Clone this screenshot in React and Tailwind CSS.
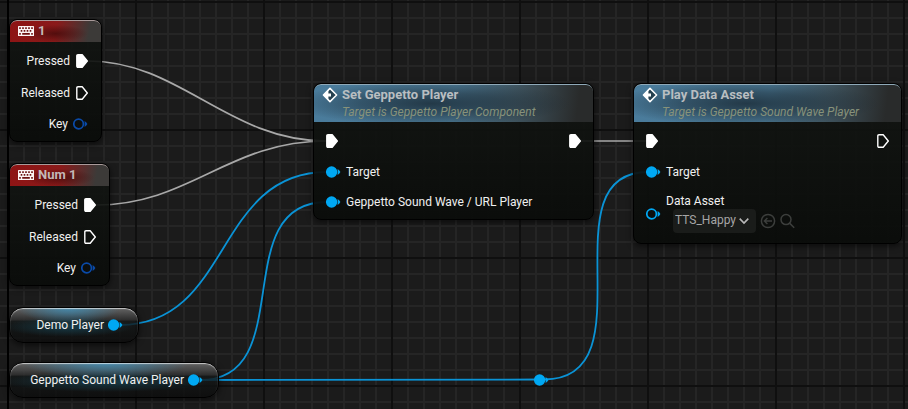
import React from "react";

const WHITE = "#ffffff";
const SKY = "#00a8f3";
const NAVY = "#0a4aa8";

function ExecPin({ filled }) {
  return (
    <svg width="12" height="14" viewBox="0 0 12 14" className="shrink-0">
      <path
        d="M2 .8H6.2L11.3 7 6.2 13.2H2Q.8 13.2 .8 12V2Q.8 .8 2 .8Z"
        fill={filled ? WHITE : "none"}
        stroke={WHITE}
        strokeWidth="1.4"
        strokeLinejoin="round"
      />
    </svg>
  );
}

function DataPin({ color = SKY, filled }) {
  return (
    <svg width="16" height="12" viewBox="0 0 16 12" className="shrink-0">
      <circle cx="5.6" cy="6" r="4.8" fill={filled ? color : "none"} stroke={color} strokeWidth="1.7" />
      <path d="M11.6 3Q13.8 4.6 14.4 6 13.8 7.4 11.6 9Z" fill={color} />
    </svg>
  );
}

function KeyboardIcon() {
  return (
    <svg width="16" height="10" viewBox="0 0 16 10" className="shrink-0">
      <rect width="16" height="10" rx="0.6" fill="#fbf4f4" />
      <g fill="#6d1010">
        <path d="M1.2 1.2h1.6V3H1.2zM4.2 1.2h1.6V3H4.2zM7.2 1.2h1.6V3H7.2zM10.2 1.2h1.6V3h-1.6zM13.2 1.2h1.6V3h-1.6z" />
        <path d="M2.7 4.1h1.6v1.6H2.7zM5.7 4.1h1.6v1.6H5.7zM8.7 4.1h1.6v1.6H8.7zM11.7 4.1h1.6v1.6h-1.6z" />
        <path d="M1.2 7h1.6v1.7H1.2zM4.2 7h7.6v1.7H4.2zM13.2 7h1.6v1.7h-1.6z" />
      </g>
    </svg>
  );
}

function EventIcon() {
  return (
    <svg width="16" height="16" viewBox="0 0 16 16" className="shrink-0">
      <path d="M8 1.4 14.6 8 8 14.6 1.4 8Z" fill="#24404f" stroke={WHITE} strokeWidth="1.5" strokeLinejoin="round" />
      <path d="M1.4 8 6.4 3V6.4H9V9.6H6.4V13Z" fill={WHITE} />
    </svg>
  );
}

const frame =
  "absolute overflow-hidden rounded-lg border border-black bg-linear-to-b from-[#121512]/90 to-[#0a0c0a]/95 shadow-[0_2px_6px_rgba(0,0,0,0.6)]";

function KeyNode({ title, className }) {
  return (
    <section className={`${frame} ${className}`}>
      <header className="flex h-[22px] items-center gap-1 rounded-t-[7px] border-t border-[#a99a9a] bg-[radial-gradient(ellipse_at_50%_60%,rgba(60,8,8,0.7),transparent_50%),linear-gradient(100deg,#8e1414_0%,#8a1a1a_50%,#3c3a38_86%)] pb-[2px] pl-2">
        <KeyboardIcon />
        <h2 className="text-[13px] leading-4 font-bold text-[#c4b8b8]">{title}</h2>
      </header>
      <div className="flex flex-col pt-[3px] pr-[13px]">
        <div className="flex h-8 items-center justify-end gap-[6px]">
          Pressed <ExecPin filled />
        </div>
        <div className="flex h-8 items-center justify-end gap-[6px]">
          Released <ExecPin />
        </div>
        <div className="-mr-px flex h-[30px] items-center justify-end gap-[5px]">
          Key <DataPin color={NAVY} />
        </div>
      </div>
    </section>
  );
}

function FunctionNode({ title, subtitle, className, children }) {
  return (
    <section className={`${frame} ${className}`}>
      <header className="flex h-[38px] gap-1 rounded-t-[7px] border-t border-[#8fa9b8] bg-[radial-gradient(ellipse_50%_60%_at_42%_50%,rgba(22,36,46,0.75),rgba(22,36,46,0.45)_50%,transparent),linear-gradient(97deg,#4a7c9c_0%,#4b7893_50%,#3f545f_72%,#292b2b_94%)] pt-[2px] pl-2">
        <EventIcon />
        <div>
          <h2 className="text-[13px] leading-4 font-bold text-[#b9bec1]">{title}</h2>
          <p className="text-[12px] leading-[18px] text-[#87927a] italic">{subtitle}</p>
        </div>
      </header>
      {children}
    </section>
  );
}

function VariableNode({ name, className }) {
  return (
    <section
      className={`absolute flex h-9 items-center justify-end gap-1 overflow-hidden rounded-[14px] border border-black bg-[radial-gradient(ellipse_40%_45%_at_46%_0%,rgba(60,150,195,0.75),transparent),radial-gradient(ellipse_50%_30%_at_46%_55%,rgba(24,74,92,0.7),transparent),linear-gradient(180deg,rgba(104,104,104,0.95)_0%,rgba(46,46,46,0.85)_36%,rgba(20,24,24,0.8)_38%,rgba(12,12,12,0.8)_100%)] pr-[14px] shadow-[0_2px_6px_rgba(0,0,0,0.6),inset_0_1px_1px_rgba(255,255,255,0.65)] ${className}`}
    >
      {name} <DataPin filled />
    </section>
  );
}

function Wires() {
  return (
    <svg className="absolute top-0 left-0" width="908" height="409" viewBox="0 0 908 409" fill="none">
      <g stroke="#a8a8a8" strokeWidth="1.7">
        <path d="M88 61C180 61 228 141 326 141" />
        <path d="M96 205C190 205 228 141 326 141" />
        <path d="M580 141H648" />
      </g>
      <g stroke="#0a93d6" strokeWidth="1.8">
        <path d="M120 325C232 325 214 172 327 172" />
        <path d="M200 380C300 380 226 202 327 202" />
        <path d="M200 380L540 379.5" />
        <path d="M544 379.5C652 379.5 544 172 648 172" />
      </g>
    </svg>
  );
}

export default function App() {
  return (
    <main className="relative h-screen min-h-[409px] w-full overflow-hidden bg-[#1b1b1b] font-['Roboto','Liberation_Sans',sans-serif] text-[12px] leading-4 text-[#f0f0f0]">
      <div className="absolute inset-0 bg-[linear-gradient(90deg,#252525_2px,transparent_2px),linear-gradient(180deg,#252525_2px,transparent_2px)] bg-size-[16px_16px] bg-position-[7px_1px]" />
      <div className="absolute inset-0 bg-[linear-gradient(90deg,#0f0f0f_2px,transparent_2px),linear-gradient(180deg,#0f0f0f_2px,transparent_2px)] bg-size-[128px_128px] bg-position-[7px_1px]" />
      <div className="absolute inset-y-0 left-[7px] w-[2px] bg-black" />
      <Wires />
      <div className="absolute top-[374px] left-[534px]">
        <DataPin filled />
      </div>

      <KeyNode title="1" className="top-[19px] left-[9px] h-[123px] w-[93px]" />
      <KeyNode title="Num 1" className="top-[163px] left-[9px] h-[123px] w-[101px]" />
      <VariableNode name="Demo Player" className="top-[307px] left-[9px] w-[130px]" />
      <VariableNode name="Geppetto Sound Wave Player" className="top-[362px] left-[9px] w-[210px]" />

      <FunctionNode
        title="Set Geppetto Player"
        subtitle="Target is Geppetto Player Component"
        className="top-[83px] left-[313px] h-[137px] w-[281px]"
      >
        <div className="px-3 pt-[3px]">
          <div className="flex h-8 items-center justify-between">
            <ExecPin filled />
            <ExecPin filled />
          </div>
          <div className="flex h-[30px] items-center gap-1">
            <DataPin filled /> Target
          </div>
          <div className="flex h-[30px] items-center gap-1">
            <DataPin filled /> Geppetto Sound Wave / URL Player
          </div>
        </div>
      </FunctionNode>

      <FunctionNode
        title="Play Data Asset"
        subtitle="Target is Geppetto Sound Wave Player"
        className="top-[83px] left-[633px] h-[161px] w-[269px]"
      >
        <div className="px-3 pt-[3px]">
          <div className="flex h-8 items-center justify-between">
            <ExecPin filled />
            <ExecPin />
          </div>
          <div className="flex h-[30px] items-center gap-1">
            <DataPin filled /> Target
          </div>
          <div className="flex items-center gap-1 pt-[7px]">
            <DataPin />
            <div>
              <label htmlFor="data-asset" className="block leading-[15px]">
                Data Asset
              </label>
              <div className="flex items-center gap-1 pl-[7px]">
                <div className="relative">
                  <select
                    id="data-asset"
                    className="block h-6 w-[83px] appearance-none rounded-sm bg-[#1a1c1a] pb-[2px] pl-[2px] text-[12px] text-[#a6a6a6]"
                  >
                    <option>TTS_Happy</option>
                  </select>
                  <svg className="pointer-events-none absolute top-2 right-[7px]" width="10" height="8" viewBox="0 0 10 8" fill="none">
                    <path d="M.7 1.6 5 6 9.3 1.6" stroke="#b8b8b8" strokeWidth="1.6" />
                  </svg>
                </div>
                <button aria-label="Use selected asset">
                  <svg width="16" height="16" viewBox="0 0 16 16" fill="none" stroke="#3c3e3c" strokeWidth="1.5">
                    <circle cx="8" cy="8" r="6.6" />
                    <path d="M12 8H4.6M7.4 5 4.4 8 7.4 11" />
                  </svg>
                </button>
                <button aria-label="Browse to asset">
                  <svg width="16" height="16" viewBox="0 0 16 16" fill="none" stroke="#3c3e3c" strokeWidth="1.5">
                    <circle cx="6" cy="6.6" r="5" />
                    <path d="M9.8 10.4 14.2 14.8" />
                  </svg>
                </button>
              </div>
            </div>
          </div>
        </div>
      </FunctionNode>
    </main>
  );
}
